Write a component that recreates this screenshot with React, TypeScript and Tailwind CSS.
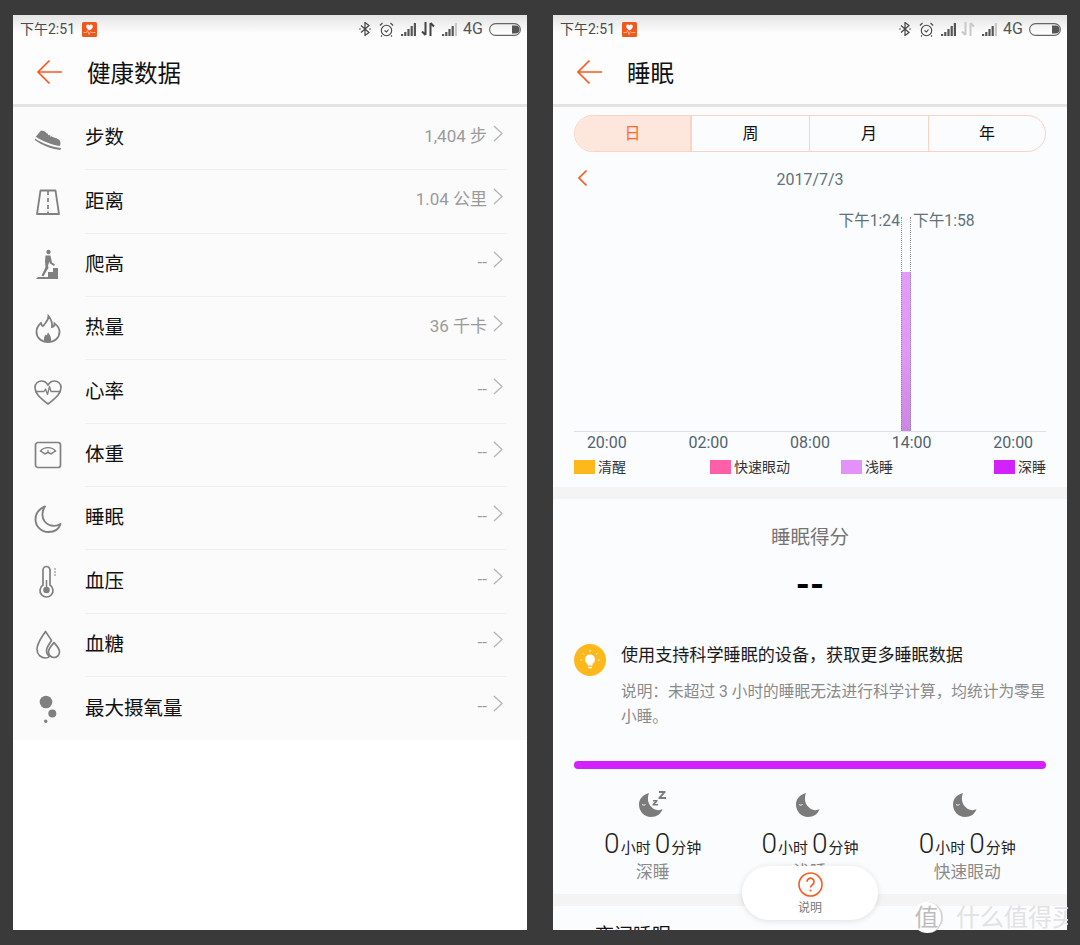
import React from "react";

const FONT = "font-['Roboto','Noto_Sans_CJK_SC',sans-serif]";

function AppBadge() {
  return (
    <svg width="15" height="15" viewBox="0 0 15 15" className="block">
      <rect width="15" height="15" rx="1.500" fill="#f0561d" />
      <path d="M7.500 8.600C5.200 6.800 4.200 5.800 4.200 4.400 4.200 3.300 5 2.600 5.900 2.600c.7 0 1.200.4 1.600 1 .4-.6.9-1 1.600-1 .9 0 1.700.7 1.700 1.800 0 1.400-1 2.400-3.300 4.200z" fill="#fff" />
      <path d="M1.500 10.500h3l1-2 1.500 4 1.500-3 1 1h4" fill="none" stroke="#ffc9a8" strokeWidth="0.8" />
    </svg>
  );
}

function Signal({ full = true }: { full?: boolean }) {
  const bars = [2, 4, 7, 10, 13];
  return (
    <svg width="16" height="13" viewBox="0 0 16 13" className="block">
      {bars.map((h, i) => (
        <rect key={i} x={i * 3.2} y={13 - h} width="2.2" height={h} fill={i === 4 && !full ? "#c8c8c8" : "#555"} />
      ))}
    </svg>
  );
}

function StatusBar({ dim = false }: { dim?: boolean }) {
  const arrow = dim ? "#c9c9c9" : "#444";
  return (
    <div className="h-[30px] shrink-0 flex items-center pl-[7px] pr-[6px] pb-[2px] bg-gradient-to-b from-[#e4e4e4] to-[#fdfdfd] to-[60%] text-[#4a4a4a]">
      <span className="text-[14px] leading-none">下午2:51</span>
      <span className="ml-[7px]"><AppBadge /></span>
      <div className="ml-auto flex items-center">
        <svg width="12" height="14" viewBox="0 0 12 14" className="block" fill="none" stroke="#444" strokeWidth="1.2">
          <path d="M2 3.500l8 7-4 3V.5l4 3-8 7" />
          <circle cx="1" cy="7" r="0.8" fill="#444" stroke="none" />
          <circle cx="11" cy="7" r="0.8" fill="#444" stroke="none" />
        </svg>
        <svg width="15" height="15" viewBox="0 0 15 15" className="block ml-[8px]" fill="none" stroke="#444" strokeWidth="1.1">
          <circle cx="7.5" cy="8.5" r="5.2" />
          <path d="M5.500 8.500l2 1.500 2-2.500M.9 3.500L3.500 1M14.100 3.500L11.500 1M3 13.500l-1 1M12 13.500l1 1" />
        </svg>
        <span className="ml-[7px]"><Signal /></span>
        <svg width="14" height="14" viewBox="0 0 14 14" className="block ml-[4px]" fill="none" stroke={arrow} strokeWidth="2">
          <path d="M4.500 0v13M1 9.500l3.500 3.500M9.500 14V1M9.500 1L13 4.500" />
        </svg>
        <span className="ml-[7px]"><Signal full={false} /></span>
        <span className="ml-[5px] text-[16px] leading-none text-[#555]">4G</span>
        <svg width="32" height="13" viewBox="0 0 32 13" className="block ml-[6px]">
          <rect x="0.6" y="0.6" width="30.8" height="11.8" rx="5.9" fill="none" stroke="#666" strokeWidth="1.1" />
          <path d="M23 2.500h3.500a4 4 0 0 1 0 8H23z" fill="#555" />
        </svg>
      </div>
    </div>
  );
}

function Header({ title }: { title: string }) {
  return (
    <div className="h-[62px] shrink-0 flex items-center border-b-[3px] border-[#e3e3e3] bg-[#fdfdfd]">
      <svg width="28" height="28" viewBox="0 0 28 28" className="block ml-[23px] mb-[4px]" fill="none" stroke="#fb5a1e" strokeWidth="1.7">
        <path d="M26 13H2.500M13.500 1.500L2 13l11.500 11.500" />
      </svg>
      <span className="ml-[23px] text-[23.5px] leading-none text-[#111]">{title}</span>
    </div>
  );
}

const G = "#808080";
const icons: Record<string, React.ReactNode> = {
  shoe: (
    <g>
      <path d="M3.500 14L9 7.500l3 .5c3 2 6 5 10 6.500 4 1 6.500 2.500 6.500 5.500l-.5 3c-8-1-18-5-24.500-9.500z" fill={G} />
      <path d="M3 15.500c7 4.500 16 8.500 26 9.500l-.5 2c-9.500-1-19.500-5-25.500-10z" fill={G} />
      <path d="M14 10l2-1.500M16 12l2-1.500M18.500 13.500l1.500-1.500" stroke="#fff" strokeWidth="0.9" />
    </g>
  ),
  road: (
    <g fill="none" stroke={G} strokeWidth="1.8" strokeLinejoin="round">
      <path d="M8.500 4.500h15L27 28H5z" />
      <path d="M16 5v4M16 12v4M16 19v4M16 25.500v2.500" strokeWidth="1.7" />
    </g>
  ),
  climb: (
    <g fill={G}>
      <circle cx="16.5" cy="3" r="2.2" />
      <path d="M13.500 6.500h5l1.500 7 3 2-1 1.500-4-2.500-.5-2-1.500 4 .5 2.500-2 3-3 5.500-2-1 3-6 1-2.500-.5-5.500z" />
      <path d="M4 30l2-2h10v-5h5v-4h5v11z" />
    </g>
  ),
  flame: (
    <g fill="none" stroke={G} strokeWidth="1.8">
      <path d="M16.500 3c0 5-3 6.500-4.500 9-1 1.500-1.500 1-2 .5L9 10C6 12.500 4.500 16 4.500 19c0 6 5 10 11.500 10s11.500-4 11.500-10c0-6-4-7.500-5-8.500 0 2-1 3.500-2.500 3.500 .5-4-1-8-3.500-11z" />
      <path d="M12 28c-.5-3 .5-5 1.500-6.500l1 1 1.500-3c2 2 3.500 5 3 8.500z" fill={G} stroke="none" />
    </g>
  ),
  heart: (
    <g fill="none" stroke={G} strokeWidth="1.7" strokeLinejoin="round">
      <path d="M16 28C7 21 3 17 3 11.500 3 7.500 6 5 9.500 5c2.700 0 5 1.500 6.500 4 1.500-2.500 3.800-4 6.500-4C26 5 29 7.500 29 11.500 29 17 25 21 16 28z" />
      <path d="M3.500 15.500h8.500l1.500-2.500 2 5.500 2-8 1.500 5h9" strokeWidth="1.3" />
    </g>
  ),
  scale: (
    <g fill="none" stroke={G} strokeWidth="1.7">
      <rect x="3.5" y="3.5" width="25" height="25" rx="2.5" />
      <path d="M8.500 12C12 7.500 20 7.500 23.500 12L19 14.800c-2-1.300-4-1.300-6 0z" strokeWidth="1.4" />
      <path d="M16 11v3" strokeWidth="1.2" />
    </g>
  ),
  moon: (
    <path d="M13 3.500C8 5.500 3.500 10 3.500 16.500 3.500 23.500 9.500 29 16.500 29c6 0 10.500-3 12-8-2 1.300-5 2-7.500 1.800C13.500 22 10 16 10.500 11c.3-3 1-5.500 2.500-7.500z" fill="none" stroke={G} strokeWidth="1.9" strokeLinejoin="round" />
  ),
  therm: (
    <g fill="none" stroke={G} strokeWidth="1.7">
      <path d="M11 3.500a3.500 3.500 0 0 1 7 0v15a6.500 6.500 0 1 1-7 0z" transform="translate(0 0.5)" />
      <circle cx="14.500" cy="24" r="3.300" fill={G} stroke="none" />
      <path d="M14.500 14v8" strokeWidth="1.5" />
      <path d="M22 3h2M22 6h2M22 9h2" strokeWidth="1" />
    </g>
  ),
  drops: (
    <g fill="none" stroke={G} strokeWidth="1.7" strokeLinejoin="round">
      <path d="M13.500 2.500C9 9.500 5 14 5 20.500c0 5 4 8.500 8.500 8.500 1.500 0 3-.5 4-1.500-2-1.500-3-3.500-3-6 0-4 3-6.500 5-10-1.500-2.500-4-6-6-9z" />
      <path d="M22 13.500c-2.500 3.500-5.500 5.500-5.500 9.500 0 3 2.500 5.500 5.500 5.500s5.500-2.500 5.500-5.500c0-4-3-6-5.500-9.500z" />
    </g>
  ),
  dots: (
    <g fill={G}>
      <circle cx="14" cy="9" r="6.3" />
      <circle cx="20.3" cy="20.5" r="4" />
      <circle cx="13.7" cy="28.3" r="1.7" />
    </g>
  ),
};

const rows: [string, string, string][] = [
  ["shoe", "步数", "1,404 步"],
  ["road", "距离", "1.04 公里"],
  ["climb", "爬高", "--"],
  ["flame", "热量", "36 千卡"],
  ["heart", "心率", "--"],
  ["scale", "体重", "--"],
  ["moon", "睡眠", "--"],
  ["therm", "血压", "--"],
  ["drops", "血糖", "--"],
  ["dots", "最大摄氧量", "--"],
];

function Row({ icon, label, value, last }: { icon: string; label: string; value: string; last: boolean }) {
  return (
    <div className="h-[63.34px] flex items-stretch">
      <div className="w-[72px] pl-[19px] flex items-center">
        <svg width="32" height="32" viewBox="0 0 32 32" className="block overflow-visible">{icons[icon]}</svg>
      </div>
      <div className={`flex-1 mr-[21px] flex items-center ${last ? "" : "border-b border-[#efefef]"}`}>
        <span className="text-[19.5px] leading-none text-[#111]">{label}</span>
        <span className="ml-auto mb-[4px] text-[17px] leading-none text-[#9a9a9a]">{value}</span>
        <svg width="10" height="17" viewBox="0 0 10 17" className="block ml-[6px] mr-[3px] mb-[10px]" fill="none" stroke="#b5b5b5" strokeWidth="1.3">
          <path d="M1 1l8 7.500L1 16" />
        </svg>
      </div>
    </div>
  );
}

function LeftPhone() {
  return (
    <div className="w-[514px] h-[915px] bg-white overflow-hidden flex flex-col">
      <StatusBar />
      <Header title="健康数据" />
      <div className="bg-[#fbfbfb]">
        {rows.map((r, i) => (
          <Row key={r[1]} icon={r[0]} label={r[1]} value={r[2]} last={i === rows.length - 1} />
        ))}
      </div>
    </div>
  );
}

function Tabs() {
  return (
    <div className="mx-[21px] mt-[8px] h-[37px] flex rounded-full border border-[#fcd3c0] overflow-hidden text-[16px] text-[#111] shrink-0">
      <div className="w-[117px] bg-[#fde6dc] border-r-2 border-[#fcd3c0] flex items-center justify-center text-[#fb6a2e]">日</div>
      <div className="w-[118px] border-r border-[#fcd3c0] flex items-center justify-center">周</div>
      <div className="w-[119px] border-r border-[#fcd3c0] flex items-center justify-center">月</div>
      <div className="flex-1 flex items-center justify-center">年</div>
    </div>
  );
}

function Chart() {
  return (
    <div className="mx-[21px] h-[236px] relative border-b border-[#dde1e6] shrink-0">
      <span className="absolute right-[146px] top-[17px] text-[15.7px] leading-none text-[#5f717b] whitespace-nowrap">下午1:24</span>
      <span className="absolute left-[339px] top-[17px] text-[15.7px] leading-none text-[#5f717b] whitespace-nowrap">下午1:58</span>
      <div className="absolute left-[327px] top-[76px] bottom-0 w-[10px] bg-gradient-to-b from-[#e49bf9] via-[#e09af5] to-[#cc85e2]" />
      <div className="absolute left-[327px] top-[21px] bottom-0 w-[10px] border-x border-dotted border-[#8f8f8f]" />
    </div>
  );
}

function Legend({ color, text, className = "" }: { color: string; text: string; className?: string }) {
  return (
    <div className={`flex items-center ${className}`}>
      <span className={`block w-[21px] h-[14px] ${color}`} />
      <span className="ml-[3px] text-[14px] leading-none text-[#333]">{text}</span>
    </div>
  );
}

function SleepMoon({ z = false }: { z?: boolean }) {
  return (
    <svg width="30" height="28" viewBox="0 0 30 28" className="block">
      <path d="M11 3C5 4.500 1 9 1 14.500 1 21.500 6.500 27 13 27c5.500 0 10-3 11.500-8-1.500 1-3.500 1.500-5.500 1C14 19 10.500 14.500 10 10c-.2-2.500.2-5 1-7z" fill="#7b7b7b" />
      <path d="M4 14.500c1 .8 2.500.8 3.500 0" stroke="#fff" strokeWidth="1" fill="none" />
      {z && <path d="M21 1h6.500v1.500L23.500 7H28v2h-7.500V7.500L24.500 3H21zM15 10h4.500v1.200L17 14h3v1.500h-5.500v-1.200L17 11.500h-2z" fill="#7b7b7b" />}
    </svg>
  );
}

function Stat({ label, z = false }: { label: string; z?: boolean }) {
  return (
    <div className="flex flex-col items-center">
      <SleepMoon z={z} />
      <div className="mt-[12px] h-[28px] flex items-baseline text-[#222] whitespace-nowrap">
        <span className="text-[28px] leading-[28px] font-light">0</span>
        <span className="text-[15px] ml-[1px]">小时</span>
        <span className="text-[28px] leading-[28px] font-light ml-[4px]">0</span>
        <span className="text-[15px] ml-[1px]">分钟</span>
      </div>
      <div className="mt-[2px] text-[16.8px] leading-[24px] text-[#8a8a8a]">{label}</div>
    </div>
  );
}

function RightPhone() {
  return (
    <div className="relative w-[514px] h-[915px] bg-[#fbfcfe] overflow-hidden flex flex-col">
      <StatusBar dim />
      <Header title="睡眠" />
      <Tabs />
      <div className="h-[44px] mx-[21px] relative flex items-center justify-center shrink-0">
        <svg width="11" height="18" viewBox="0 0 11 18" className="absolute left-[3px] top-[17px]" fill="none" stroke="#fb5a1e" strokeWidth="1.7">
          <path d="M9.500 1.500L2 9l7.500 7.500" />
        </svg>
        <span className="mt-[12px] text-[16px] leading-none text-[#5f717b]">2017/7/3</span>
      </div>
      <Chart />
      <div className="ml-[3px] w-[508px] grid grid-cols-5 h-[22px] items-center text-[16px] leading-none text-[#51636d] shrink-0">
        <span className="text-center">20:00</span>
        <span className="text-center">02:00</span>
        <span className="text-center">08:00</span>
        <span className="text-center">14:00</span>
        <span className="text-center">20:00</span>
      </div>
      <div className="mx-[21px] mt-[6px] flex h-[14px] shrink-0">
        <Legend color="bg-[#ffb81c]" text="清醒" />
        <Legend color="bg-[#ff5fa8]" text="快速眼动" className="ml-[84px]" />
        <Legend color="bg-[#e392fa]" text="浅睡" className="ml-[51px]" />
        <Legend color="bg-[#d321fb]" text="深睡" className="ml-auto" />
      </div>
      <div className="mt-[13px] h-[12px] bg-[#f4f4f4] shrink-0" />
      <div className="mt-[27px] text-center text-[19.5px] leading-[24px] text-[#757575] shrink-0">睡眠得分</div>
      <div className="mt-[20px] text-center text-[36px] leading-[30px] font-bold text-black shrink-0">--</div>
      <div className="mx-[21px] mt-[44px] flex shrink-0">
        <div className="w-[32px] h-[32px] rounded-full bg-[#ffb81c] flex items-center justify-center shrink-0">
          <svg width="22" height="22" viewBox="0 0 22 22" className="block" fill="none" stroke="#fff">
            <path d="M11 5.500a5 5 0 0 0-2.500 9.300V16.500h5v-1.700A5 5 0 0 0 11 5.500z" fill="#fff" stroke="none" />
            <path d="M9 18.500h4" strokeWidth="1.5" />
            <path d="M11 1v2M3.500 4l1.400 1.400M18.500 4l-1.400 1.400M1.500 11h1.500M19 11h1.500" strokeWidth="1" />
          </svg>
        </div>
        <div className="ml-[15px] flex-1">
          <div className="text-[17.1px] leading-[22px] text-[#1a1a1a] whitespace-nowrap">使用支持科学睡眠的设备，获取更多睡眠数据</div>
          <div className="mt-[13px] text-[15.7px] leading-[25px] text-[#8a8a8a]">说明：未超过 3 小时的睡眠无法进行科学计算，均统计为零星小睡。</div>
        </div>
      </div>
      <div className="mx-[21px] mt-[32px] h-[8px] rounded-full bg-[#d321fb] shrink-0" />
      <div className="mx-[21px] mt-[21px] grid grid-cols-3 shrink-0">
        <Stat label="深睡" z />
        <Stat label="浅睡" />
        <Stat label="快速眼动" />
      </div>
      <div className="mt-[10px] h-[12px] bg-[#f4f4f4] shrink-0" />
      <div className="ml-[42px] mt-[18px] text-[19px] leading-[24px] text-[#111] shrink-0">夜间睡眠</div>
      <div className="absolute left-[189px] top-[851px] w-[136px] h-[54px] rounded-full bg-white shadow-[0_1px_6px_rgba(0,0,0,0.12)] flex flex-col items-center pt-[6px]">
        <svg width="25" height="25" viewBox="0 0 25 25" className="block" fill="none" stroke="#fb5a1e" strokeWidth="1.6">
          <circle cx="12.5" cy="12.5" r="11.5" />
          <path d="M9 9.800a3.500 3.500 0 1 1 5.500 2.800c-1.300 1-2 1.400-2 3" strokeWidth="1.7" />
          <circle cx="12.5" cy="18.5" r="1.1" fill="#fb5a1e" stroke="none" />
        </svg>
        <span className="mt-[5px] text-[12px] leading-none text-[#777]">说明</span>
      </div>
    </div>
  );
}

export default function App() {
  return (
    <div className={`relative w-[1080px] h-[945px] bg-[#3a3a3a] overflow-hidden pt-[15px] pl-[13px] flex gap-[26px] items-start ${FONT}`}>
      <LeftPhone />
      <RightPhone />
      <div className="absolute left-[912px] top-[902px] w-[156px] h-[31px] flex items-center overflow-hidden">
        <div className="w-[31px] h-[31px] rounded-full bg-white border-r-2 border-[#d4d4d4] flex items-center justify-center text-[24px] leading-none text-[#bdbdbd] shrink-0">值</div>
        <span className="ml-[13px] text-[24px] leading-none text-[#e2e2e2] whitespace-nowrap">什么值得买</span>
      </div>
    </div>
  );
}
